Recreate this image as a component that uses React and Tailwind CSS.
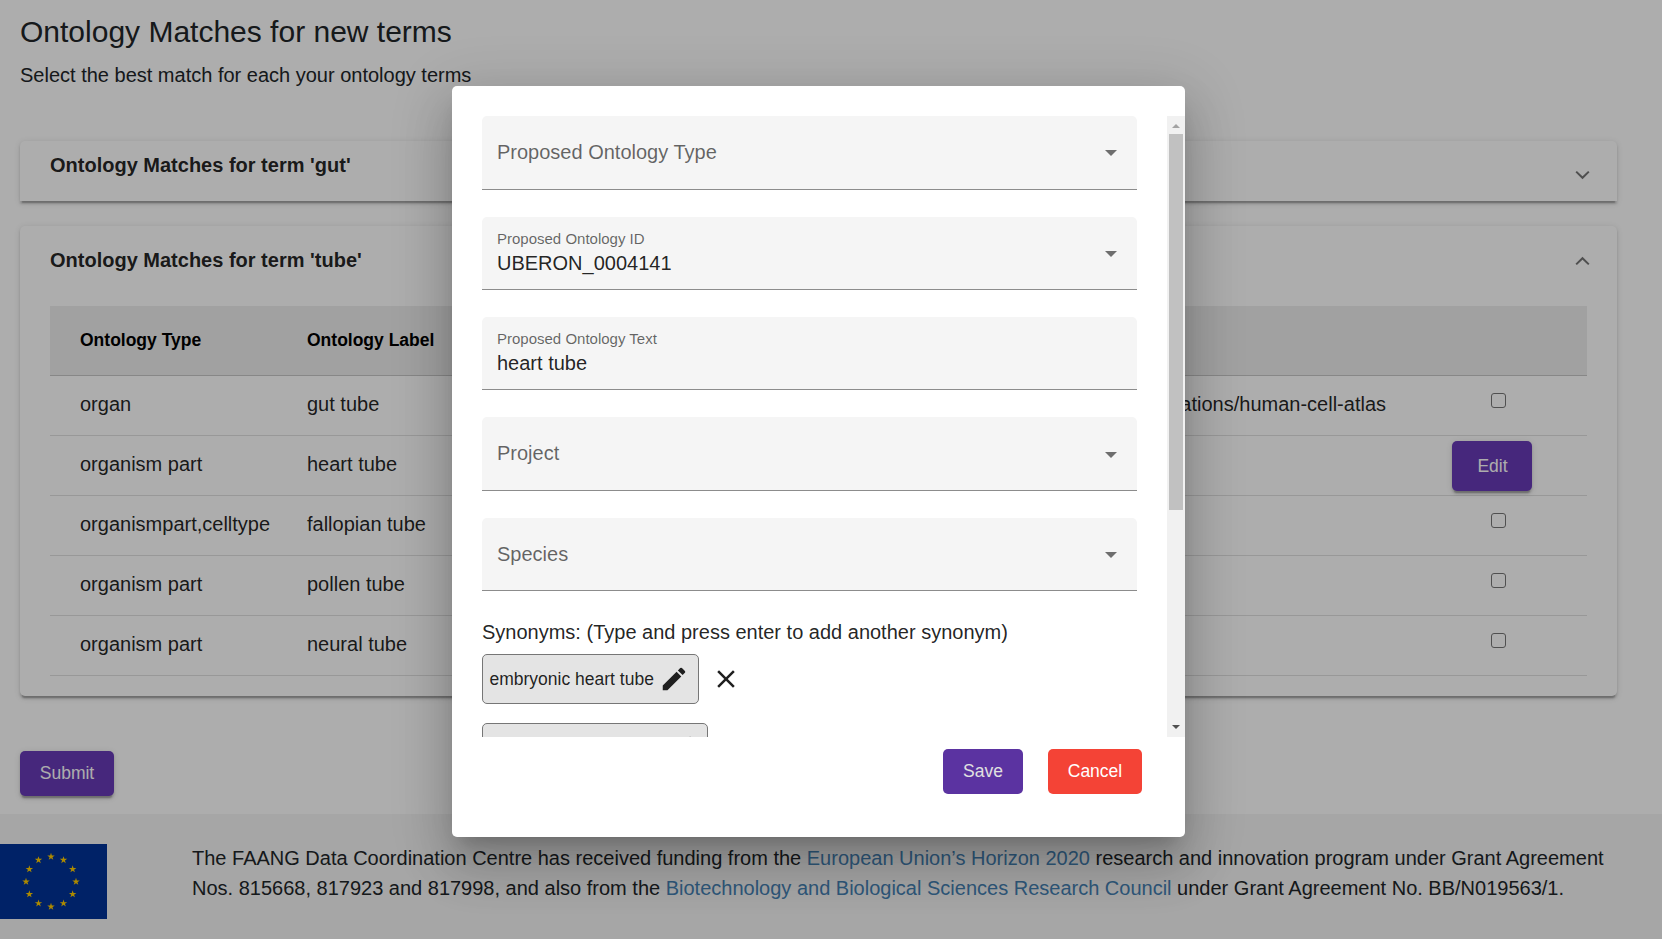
import React from 'react';

const rows = [
  { type: 'organ', label: 'gut tube', link: 'ations/human-cell-atlas' },
  { type: 'organism part', label: 'heart tube', edit: true },
  { type: 'organismpart,celltype', label: 'fallopian tube' },
  { type: 'organism part', label: 'pollen tube' },
  { type: 'organism part', label: 'neural tube' },
];

const raised =
  'shadow-[0_3.75px_1.25px_-2.5px_rgba(0,0,0,0.2),0_2.5px_2.5px_0_rgba(0,0,0,0.14),0_1.25px_6.25px_0_rgba(0,0,0,0.12)]';

function Chevron({ up }) {
  return (
    <svg width="16" height="10" viewBox="0 0 16 10" fill="none" stroke="#757575" strokeWidth="2">
      <path d={up ? 'M1.2 8.4 7.5 2.2l6.3 6.2' : 'M1.2 1.6 7.5 7.8l6.3-6.2'} />
    </svg>
  );
}

function Pencil() {
  return (
    <svg width="30" height="30" viewBox="0 0 24 24" fill="#1f1f1f" className="shrink-0">
      <path d="M3 17.25V21h3.75L17.81 9.94l-3.75-3.75L3 17.25zM20.71 7.04a.996.996 0 0 0 0-1.41l-2.34-2.34a.996.996 0 0 0-1.41 0l-1.83 1.83 3.75 3.75 1.83-1.83z" />
    </svg>
  );
}

function Field({ label, value, select, className, labelClass = '', arrowClass = 'mt-0.5' }) {
  return (
    <div
      className={`flex w-[655px] shrink-0 items-center rounded-t-[5px] border-b border-[#8c8c8c] bg-[#f5f5f5] pl-[15px] pr-5 ${className}`}
    >
      <div className="flex-1">
        {value ? (
          <>
            <div className="mt-[-3px] h-[22px] text-[15px] leading-[22px] text-black/60">{label}</div>
            <div className="h-[26px] text-[20px] leading-[26px] text-black/[0.87]">{value}</div>
          </>
        ) : (
          <div className={`text-[20px] leading-[30px] text-black/60 ${labelClass}`}>{label}</div>
        )}
      </div>
      {select && (
        <svg width="12" height="6" viewBox="0 0 12 6" fill="#6e6e6e" className={arrowClass}>
          <path d="M0 0h12L6 6z" />
        </svg>
      )}
    </div>
  );
}

function EuFlag() {
  const star = Array.from({ length: 10 }, (_, i) => {
    const r = i % 2 ? 1.5 : 3.9;
    const a = (Math.PI / 5) * i - Math.PI / 2;
    return `${(r * Math.cos(a)).toFixed(2)},${(r * Math.sin(a)).toFixed(2)}`;
  }).join(' ');
  return (
    <svg width="107" height="75" viewBox="0 0 107 75" className="shrink-0">
      <rect width="107" height="75" fill="#003399" />
      {Array.from({ length: 12 }, (_, i) => {
        const a = (Math.PI / 6) * i;
        return (
          <polygon
            key={i}
            points={star}
            fill="#ffcc00"
            transform={`translate(${51 + 25 * Math.cos(a)} ${37.7 + 25 * Math.sin(a)})`}
          />
        );
      })}
    </svg>
  );
}

function Page() {
  return (
    <div className="flex h-[939px] flex-col bg-white text-[#212529]">
      <main className="h-[814px] pl-5 pr-[45px] pt-3">
        <h1 className="text-[30px] leading-[40px]">Ontology Matches for new terms</h1>
        <p className="mt-2 text-[20px] leading-[30px]">Select the best match for each your ontology terms</p>

        <section
          className={`mt-[51px] flex h-[60px] justify-between rounded-t-[5px] bg-white pl-[30px] pr-[26px] text-black/[0.87] ${raised}`}
        >
          <h2 className="mt-[9px] text-[20px] font-bold leading-[30px]">Ontology Matches for term 'gut'</h2>
          <div className="mt-[29px]">
            <Chevron />
          </div>
        </section>

        <section className={`mt-[25px] h-[470px] rounded-[5px] bg-white px-[30px] text-black/[0.87] ${raised}`}>
          <div className="-mr-1 flex h-20 justify-between">
            <h2 className="mt-[19px] text-[20px] font-bold leading-[30px]">Ontology Matches for term 'tube'</h2>
            <div className="mt-[30px]">
              <Chevron up />
            </div>
          </div>
          <div className="flex h-[70px] items-center border-b border-black/[0.16] bg-[#eeeeee] pl-[30px] text-[17.5px] font-bold text-black">
            <div className="w-[227px]">Ontology Type</div>
            <div>Ontology Label</div>
          </div>
          {rows.map((row, i) => (
            <div key={i} className="flex h-[60px] border-b border-black/[0.12] pl-[30px] text-[20px] leading-[56px]">
              <div className="w-[227px]">{row.type}</div>
              <div className="w-[300px]">{row.label}</div>
              <div className="w-[779px] text-right">{row.link}</div>
              {row.edit ? (
                <button
                  className={`ml-[66px] mt-[5px] h-[50px] w-20 rounded-[5px] bg-[#673ab7] pl-px text-[17.5px] leading-[48px] text-white ${raised}`}
                >
                  Edit
                </button>
              ) : (
                <div className="ml-[105px] mt-[17px] h-[15px] w-[15px] rounded-[3px] border border-[#767676] bg-white" />
              )}
            </div>
          ))}
        </section>

        <button className={`mt-[55px] h-[45px] w-[94px] rounded-[5px] bg-[#673ab7] text-[17.5px] text-white ${raised}`}>
          Submit
        </button>
      </main>

      <footer className="flex h-[125px] bg-[#f5f5f5] pt-[30px]">
        <EuFlag />
        <p className="-mt-px ml-[85px] whitespace-nowrap text-[20px] leading-[30px]">
          The FAANG Data Coordination Centre has received funding from the{' '}
          <span className="text-[#4682b4]">European Union’s Horizon 2020</span> research and innovation program under
          Grant Agreement
          <br />
          Nos. 815668, 817923 and 817998, and also from the{' '}
          <span className="text-[#4682b4]">Biotechnology and Biological Sciences Research Council</span> under Grant
          Agreement No. BB/N019563/1.
        </p>
      </footer>
    </div>
  );
}

function Dialog() {
  return (
    <div className="h-[751px] w-[733px] rounded-[5px] bg-white pt-[30px] shadow-[0_13.75px_18.75px_-8.75px_rgba(0,0,0,0.2),0_30px_47.5px_3.75px_rgba(0,0,0,0.14),0_11.25px_57.5px_10px_rgba(0,0,0,0.12)]">
      <div className="flex h-[621px] justify-between overflow-hidden pl-[30px]">
        <div className="flex flex-col">
          <Field label="Proposed Ontology Type" select className="h-[74px]" labelClass="-mt-0.5" arrowClass="" />
          <Field label="Proposed Ontology ID" value="UBERON_0004141" select className="mt-[27px] h-[73px]" />
          <Field label="Proposed Ontology Text" value="heart tube" className="mt-[27px] h-[73px]" />
          <Field label="Project" select className="mt-[27px] h-[74px]" labelClass="-mt-0.5" />
          <Field label="Species" select className="mt-[27px] h-[73px]" />
          <div className="mt-[26px] text-[20px] leading-[30px] text-black/[0.87]">
            Synonyms: (Type and press enter to add another synonym)
          </div>
          <div className="mt-[7px] flex items-center">
            <div className="flex h-[50px] w-[217px] items-center rounded-[5px] border border-[#767676] bg-[#e4e4e4] pl-[6.5px] text-[17.5px] text-black/[0.87]">
              <span className="mr-[5.5px]">embryonic heart tube</span>
              <Pencil />
            </div>
            <svg width="30" height="30" viewBox="0 0 24 24" fill="#1f1f1f" className="ml-3">
              <path d="M19 6.41 17.59 5 12 10.59 6.41 5 5 6.41 10.59 12 5 17.59 6.41 19 12 13.41 17.59 19 19 17.59 13.41 12z" />
            </svg>
          </div>
          <div className="mt-[19px] flex h-[50px] w-[226px] shrink-0 items-center justify-end rounded-[5px] border border-[#767676] bg-[#e4e4e4] pr-[9px]">
            <Pencil />
          </div>
        </div>
        <div className="flex w-[18px] flex-col items-center bg-[#f1f1f1]">
          <svg width="18" height="18" viewBox="0 0 18 18" fill="#a3a3a3" className="shrink-0">
            <path d="M5 12h8L9 8z" />
          </svg>
          <div className="h-[376px] w-[14px] bg-[#c1c1c1]" />
          <svg width="18" height="18" viewBox="0 0 18 18" fill="#505050" className="mt-auto shrink-0">
            <path d="M5 6h8L9 10z" />
          </svg>
        </div>
      </div>
      <div className="flex justify-end gap-[25px] pr-[43px] pt-3 text-[17.5px]">
        <button className="h-[45px] w-20 rounded-[5px] bg-[#5b33a1] text-[#e0e0e0]">Save</button>
        <button className="h-[45px] w-[94px] rounded-[5px] bg-[#f44336] text-white">Cancel</button>
      </div>
    </div>
  );
}

export default function App() {
  return (
    <div className="relative h-[939px] w-[1662px] overflow-hidden font-['Liberation_Sans',Arial,sans-serif]">
      <Page />
      <div className="absolute inset-0 flex items-start bg-black/[0.32] pl-[452px] pt-[86px]">
        <Dialog />
      </div>
    </div>
  );
}
